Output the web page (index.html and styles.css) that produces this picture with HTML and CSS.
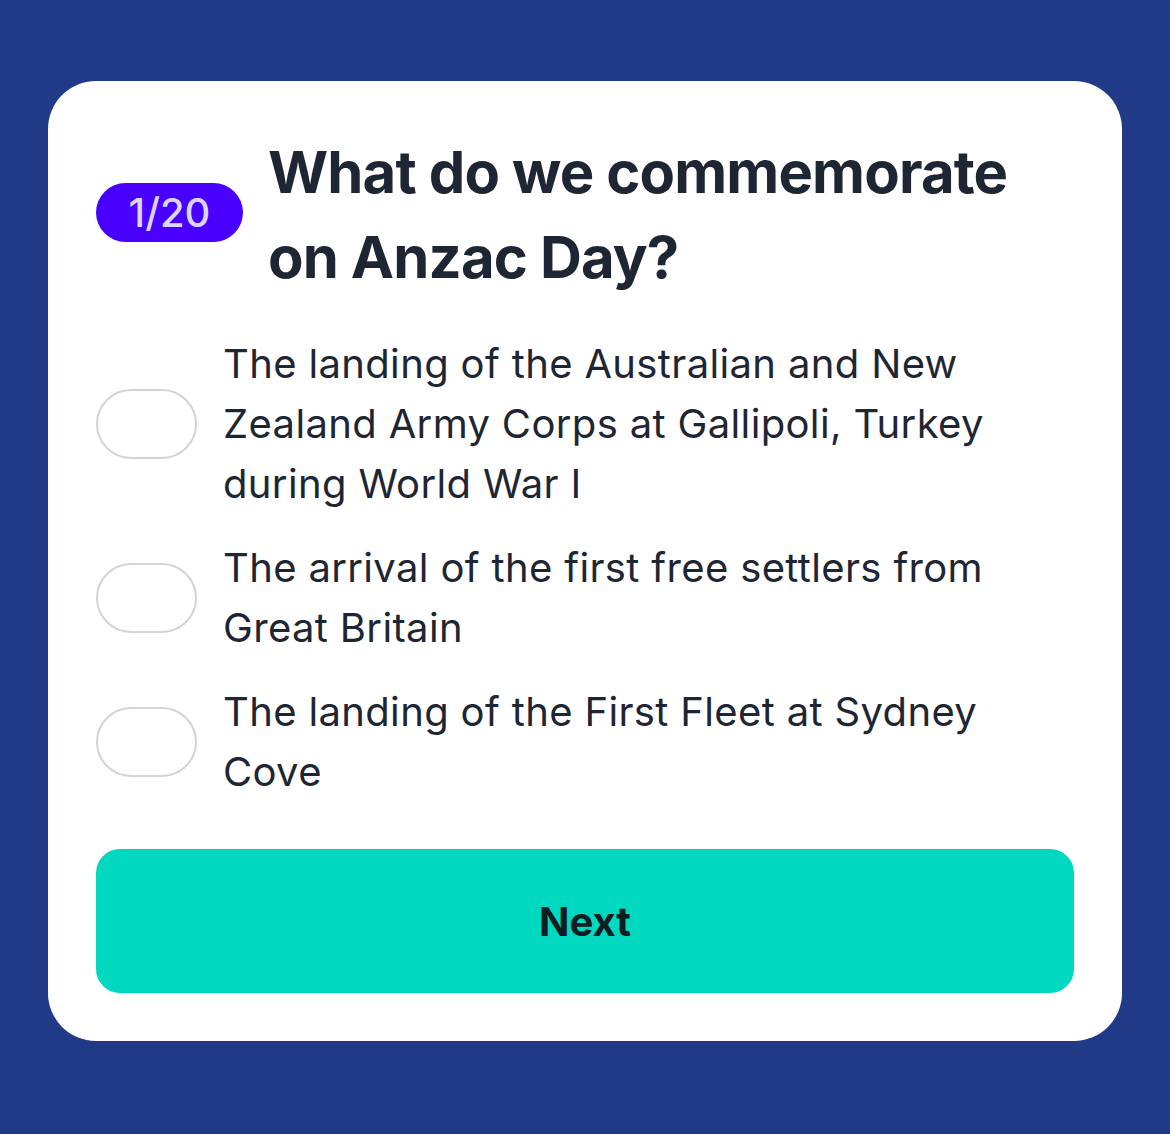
FILE: index.html
```html
<!DOCTYPE html>
<html lang="en">
<head>
    <meta charset="UTF-8">
    <meta name="viewport" content="width=device-width, initial-scale=1.0">
    <title>Citizenship Quiz</title>
    <link rel="stylesheet" href="styles.css">
</head>
<body>
    <div class="quiz-card">
        <div class="question-row">
            <div class="counter">1/20</div>
            <h1 class="question">What do we commemorate on Anzac Day?</h1>
        </div>
        <div class="answers">
            <label class="answer">
                <span class="toggle"></span>
                <span class="answer-text">The landing of the Australian and New Zealand Army Corps at Gallipoli, Turkey during World War I</span>
            </label>
            <label class="answer">
                <span class="toggle"></span>
                <span class="answer-text">The arrival of the first free settlers from Great Britain</span>
            </label>
            <label class="answer">
                <span class="toggle"></span>
                <span class="answer-text">The landing of the First Fleet at Sydney Cove</span>
            </label>
        </div>
        <button class="next-btn">Next</button>
    </div>
</body>
</html>
```

FILE: styles.css
```css
* {
    margin: 0;
    padding: 0;
    box-sizing: border-box;
}

body {
    background: #203a87;
    font-family: Inter, "Noto Sans", sans-serif;
    padding: 81px 48px 93px;
}

.quiz-card {
    background: #fff;
    border-radius: 48px;
    padding: 49px 48px 48px;
    display: flex;
    flex-direction: column;
}

.question-row {
    display: flex;
    align-items: center;
    gap: 25px;
}

.counter {
    flex-shrink: 0;
    width: 147px;
    height: 59px;
    border-radius: 30px;
    background: #4a00ff;
    color: #d9d6ff;
    font-size: 40px;
    font-weight: 500;
    display: flex;
    justify-content: center;
    align-items: center;
    margin-bottom: 6px;
}

.question {
    font-size: 58px;
    font-weight: 700;
    line-height: 85px;
    color: #1f2633;
    letter-spacing: -0.85px;
    max-width: 760px;
}

.answers {
    display: flex;
    flex-direction: column;
    gap: 24px;
    margin-top: 34px;
}

.answer {
    display: flex;
    align-items: center;
    gap: 26px;
    cursor: pointer;
}

.toggle {
    flex-shrink: 0;
    width: 101px;
    height: 70px;
    border: 2px solid #d4d4d4;
    border-radius: 35px;
}

.answer-text {
    font-size: 40px;
    line-height: 60px;
    color: #1f2633;
    letter-spacing: 0.35px;
    max-width: 790px;
}

.next-btn {
    margin-top: 47px;
    height: 144px;
    border: none;
    border-radius: 24px;
    background: #00d8c0;
    color: #0d1d21;
    font-family: inherit;
    font-size: 40px;
    font-weight: 700;
    cursor: pointer;
}
```
